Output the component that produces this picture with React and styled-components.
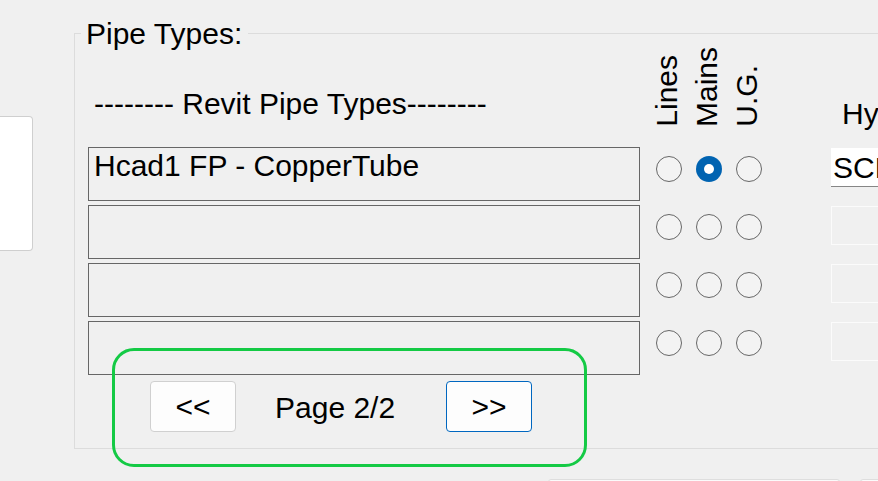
import React from "react";
import styled, { createGlobalStyle } from "styled-components";

const GlobalStyle = createGlobalStyle`
  html, body {
    margin: 0;
    padding: 0;
    background: #f0f0f0;
    overflow: hidden;
  }
  body {
    font-family: "Liberation Sans", Arial, sans-serif;
    color: #000;
  }
  #root {
    width: 878px;
    height: 481px;
    overflow: hidden;
  }
`;

const Page = styled.div`
  position: relative;
  width: 878px;
  height: 481px;
  display: flex;
  align-items: flex-start;
  overflow: hidden;
  font-size: 30px;
  line-height: 34px;
`;

const SidePanel = styled.div`
  flex: none;
  margin-top: 116px;
  width: 33px;
  height: 135px;
  box-sizing: border-box;
  background: #ffffff;
  border: 1px solid #cfcfcf;
  border-left: none;
  border-radius: 0 4px 4px 0;
`;

const Main = styled.div`
  flex: none;
  margin-left: 41px;
  margin-top: 33px;
  width: 900px;
  display: flex;
  flex-direction: column;
`;

const GroupBox = styled.div`
  position: relative;
  box-sizing: border-box;
  height: 416px;
  border: 1px solid #dcdcdc;
  padding: 0 0 0 13px;
`;

const GroupTitle = styled.div`
  position: absolute;
  top: -17px;
  left: 6px;
  padding: 0 6px 0 5px;
  background: #f0f0f0;
  white-space: nowrap;
`;

const Table = styled.div`
  display: grid;
  grid-template-columns: 561px 40px 40px 40px 1fr;
  grid-template-rows: 109px repeat(4, 54px);
  row-gap: 4px;
`;

const HeaderTitle = styled.div`
  padding: 53px 0 0 6px;
  white-space: nowrap;
`;

const VerticalLabel = styled.div`
  align-self: end;
  justify-self: center;
  margin: 0 4px 16px 0;
  writing-mode: vertical-rl;
  transform: rotate(180deg);
  line-height: 30px;
  white-space: nowrap;
`;

const FieldHeader = styled.div`
  padding: 63px 0 0 73px;
  white-space: nowrap;
  overflow: hidden;
`;

const TypeBox = styled.div`
  width: 552px;
  box-sizing: border-box;
  border: 1px solid #666666;
  padding: 1px 5px 0;
  white-space: nowrap;
  overflow: hidden;
`;

const RadioCell = styled.div`
  display: flex;
  align-items: flex-start;
  justify-content: center;
  padding-top: 9px;
`;

const Radio = styled.div`
  width: 26px;
  height: 26px;
  box-sizing: border-box;
  border-radius: 50%;
  border: ${(p) => (p.$checked ? "none" : "1.5px solid #666666")};
  background: ${(p) => (p.$checked ? "#0063b1" : "#f3f3f3")};
  display: flex;
  align-items: center;
  justify-content: center;

  &::after {
    content: "";
    display: ${(p) => (p.$checked ? "block" : "none")};
    width: 10px;
    height: 10px;
    border-radius: 50%;
    background: #ffffff;
  }
`;

const FieldCell = styled.div`
  padding: 1px 0 0 62px;
  overflow: hidden;
`;

const Field = styled.div`
  box-sizing: border-box;
  height: 39px;
  width: 200px;
  padding: 3px 0 0 2px;
  white-space: nowrap;
  background: ${(p) => (p.$filled ? "#ffffff" : "transparent")};
  border: ${(p) => (p.$filled ? "none" : "1px solid #fbfbfb")};
  border-bottom: ${(p) => (p.$filled ? "1px solid #868686" : "1px solid #fbfbfb")};
`;

const Pager = styled.div`
  display: flex;
  align-items: flex-start;
  margin: 6px 0 0 62px;
`;

const PagerButton = styled.button`
  flex: none;
  width: 86px;
  height: 51px;
  box-sizing: border-box;
  padding: 0;
  border-radius: 4px;
  background: #fdfdfd;
  border: 1px solid ${(p) => (p.$focused ? "#0067c0" : "#d0d0d0")};
  font-family: "Liberation Sans", Arial, sans-serif;
  font-size: 30px;
  line-height: 34px;
  color: #000;
`;

const PageLabel = styled.div`
  box-sizing: border-box;
  width: 210px;
  padding: 10px 0 0 39px;
  white-space: nowrap;
`;

const BottomRow = styled.div`
  display: flex;
  gap: 20px;
  margin: 30px 0 0 474px;
`;

const BottomBox = styled.div`
  width: ${(p) => p.$w}px;
  height: 20px;
  box-sizing: border-box;
  border: 1px solid #dedede;
  background: #fbfbfb;
  border-radius: 3px;
`;

const Highlight = styled.div`
  position: absolute;
  left: 112px;
  top: 348px;
  width: 475px;
  height: 119px;
  box-sizing: border-box;
  border: 3px solid #14ca45;
  border-radius: 22px;
  pointer-events: none;
`;

const rows = [
  { name: "Hcad1 FP - CopperTube", checked: 1, field: "SCH 10" },
  { name: "", checked: -1, field: "" },
  { name: "", checked: -1, field: "" },
  { name: "", checked: -1, field: "" },
];

export default function App() {
  return (
    <>
      <GlobalStyle />
      <Page>
        <SidePanel />
        <Main>
          <GroupBox>
            <GroupTitle>Pipe Types:</GroupTitle>
            <Table>
              <HeaderTitle>-------- Revit Pipe Types--------</HeaderTitle>
              <VerticalLabel>Lines</VerticalLabel>
              <VerticalLabel>Mains</VerticalLabel>
              <VerticalLabel>U.G.</VerticalLabel>
              <FieldHeader>Hydraulic</FieldHeader>
              {rows.map((r, i) => (
                <React.Fragment key={i}>
                  <TypeBox>{r.name}</TypeBox>
                  {[0, 1, 2].map((c) => (
                    <RadioCell key={c}>
                      <Radio $checked={r.checked === c} />
                    </RadioCell>
                  ))}
                  <FieldCell>
                    <Field $filled={i === 0}>{r.field}</Field>
                  </FieldCell>
                </React.Fragment>
              ))}
            </Table>
            <Pager>
              <PagerButton>&lt;&lt;</PagerButton>
              <PageLabel>Page 2/2</PageLabel>
              <PagerButton $focused>&gt;&gt;</PagerButton>
            </Pager>
          </GroupBox>
          <BottomRow>
            <BottomBox $w={292} />
            <BottomBox $w={100} />
          </BottomRow>
        </Main>
        <Highlight />
      </Page>
    </>
  );
}
